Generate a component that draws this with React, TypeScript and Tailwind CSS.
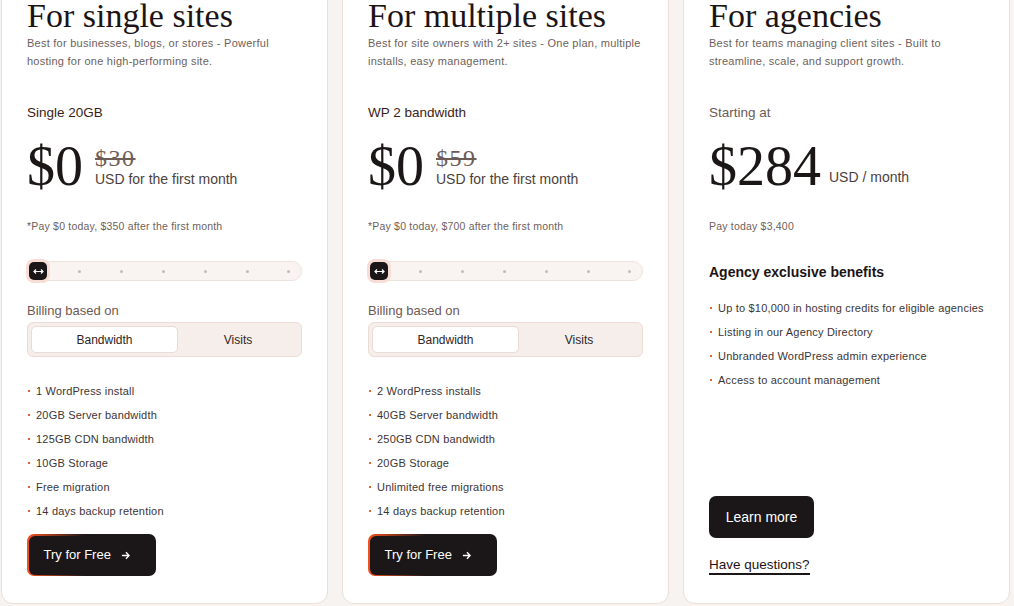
import React from 'react';

const serif = { fontFamily: '"Liberation Serif", "DejaVu Serif", serif' };

type Plan = {
  title: string;
  desc: string[];
  label: string;
  old: string;
  note: string;
  features: string[];
};

const plans: Plan[] = [
  {
    title: 'For single sites',
    desc: ['Best for businesses, blogs, or stores - Powerful', 'hosting for one high-performing site.'],
    label: 'Single 20GB',
    old: '$30',
    note: '*Pay $0 today, $350 after the first month',
    features: [
      '1 WordPress install',
      '20GB Server bandwidth',
      '125GB CDN bandwidth',
      '10GB Storage',
      'Free migration',
      '14 days backup retention',
    ],
  },
  {
    title: 'For multiple sites',
    desc: ['Best for site owners with 2+ sites - One plan, multiple', 'installs, easy management.'],
    label: 'WP 2 bandwidth',
    old: '$59',
    note: '*Pay $0 today, $700 after the first month',
    features: [
      '2 WordPress installs',
      '40GB Server bandwidth',
      '250GB CDN bandwidth',
      '20GB Storage',
      'Unlimited free migrations',
      '14 days backup retention',
    ],
  },
];

function Bullet({ children }: { children: React.ReactNode }) {
  return (
    <li className="ml-[1px] flex h-[24px] items-center gap-[6px] whitespace-nowrap text-[11px] tracking-[0.2px] text-[#3d3535]">
      <span className="h-[2px] w-[2px] shrink-0 bg-[#e0652e]" />
      {children}
    </li>
  );
}

function Slider() {
  return (
    <div className="flex h-[20px] items-center justify-between rounded-full border border-[#efe3dd] bg-[#f9f4f1] pl-[1px] pr-[3px]">
      <div className="flex h-[18px] w-[18px] items-center justify-center rounded-[5px] bg-[#1b1718] shadow-[0_0_0_3px_#f7ddd5]">
        <svg width="11" height="7" viewBox="0 0 11 7" fill="none" stroke="white" strokeWidth="1.2">
          <path d="M1 3.5h9M3 1.5 1 3.5l2 2M8 1.5l2 2-2 2" />
        </svg>
      </div>
      {[0, 1, 2, 3, 4, 5].map((i) => (
        <div key={i} className="flex w-[18px] justify-center">
          <span className="h-[3px] w-[3px] rounded-full bg-[#c4bab6]" />
        </div>
      ))}
    </div>
  );
}

function TryButton() {
  return (
    <div className="w-[129px] rounded-[7px] bg-[linear-gradient(90deg,#f4511e_0%,#1b1718_45%)] p-[1.5px]">
      <div className="flex h-[39px] items-center gap-[10px] rounded-[6px] bg-[#1b1718] pl-[15px] text-[13px] text-white">
        Try for Free
        <svg width="9" height="9" viewBox="0 0 10 10" fill="none" stroke="white" strokeWidth="1.5">
          <path d="M1 5h8M5.5 1.5 9 5 5.5 8.5" />
        </svg>
      </div>
    </div>
  );
}

function PlanCard({ p }: { p: Plan }) {
  return (
    <div className="flex w-[327px] shrink-0 flex-col rounded-[12px] border border-[#ecdfd8] bg-white px-[25px] pb-[27px] pt-[27px]">
      <h2 style={serif} className="text-[34px] leading-[38px] text-[#1c1414]">
        {p.title}
      </h2>
      <p className="-mt-[1px] text-[11px] leading-[18px] tracking-[0.25px] text-[#6e5f5c]">
        {p.desc[0]}
        <br />
        {p.desc[1]}
      </p>
      <div className="mt-[33px] text-[13.5px] leading-[20px] text-[#3b1d16]">{p.label}</div>
      <div className="mt-[15px] flex items-end gap-[12px]">
        <span style={serif} className="text-[56px] leading-[56px] text-[#1c1717]">
          $0
        </span>
        <div className="flex flex-col pb-[6px]">
          <span style={serif} className="text-[24px] leading-[23px] tracking-[1.5px] text-[#6e5c57] line-through">
            {p.old}
          </span>
          <span className="text-[14px] leading-[18px] text-[#4b3f3e]">USD for the first month</span>
        </div>
      </div>
      <div className="mt-[24px] text-[10.5px] leading-[16px] tracking-[0.2px] text-[#6e5f5c]">{p.note}</div>
      <div className="mt-[27px]">
        <Slider />
      </div>
      <div className="mt-[21px] text-[13px] leading-[18px] text-[#6e5a55]">Billing based on</div>
      <div className="mt-[2px] grid h-[35px] grid-cols-[147px_1fr] rounded-[6px] border border-[#ecdcd5] bg-[#f6eeea] p-[3px]">
        <div className="flex items-center justify-center rounded-[5px] border border-[#e9dcd6] bg-white text-[12px] text-[#2e2626]">
          Bandwidth
        </div>
        <div className="flex items-center justify-center text-[12px] text-[#2e2626]">Visits</div>
      </div>
      <ul className="mt-[22px]">
        {p.features.map((f) => (
          <Bullet key={f}>{f}</Bullet>
        ))}
      </ul>
      <div className="mt-[11px]">
        <TryButton />
      </div>
    </div>
  );
}

function AgencyCard() {
  return (
    <div className="flex w-[327px] shrink-0 flex-col rounded-[12px] border border-[#ecdfd8] bg-white px-[25px] pb-[27px] pt-[27px]">
      <h2 style={serif} className="text-[34px] leading-[38px] text-[#1c1414]">
        For agencies
      </h2>
      <p className="-mt-[1px] text-[11px] leading-[18px] tracking-[0.25px] text-[#6e5f5c]">
        Best for teams managing client sites - Built to
        <br />
        streamline, scale, and support growth.
      </p>
      <div className="mt-[33px] text-[13.5px] leading-[20px] text-[#6b5b58]">Starting at</div>
      <div className="mt-[15px] flex items-end gap-[8px]">
        <span style={serif} className="text-[56px] leading-[56px] text-[#1c1717]">
          $284
        </span>
        <span className="pb-[8px] text-[14px] leading-[18px] text-[#4b3f3e]">USD / month</span>
      </div>
      <div className="mt-[24px] text-[10.5px] leading-[16px] tracking-[0.2px] text-[#6e5f5c]">Pay today $3,400</div>
      <div className="mt-[28px] text-[14px] font-bold leading-[20px] text-[#1c1414]">Agency exclusive benefits</div>
      <ul className="mt-[14px]">
        {[
          'Up to $10,000 in hosting credits for eligible agencies',
          'Listing in our Agency Directory',
          'Unbranded WordPress admin experience',
          'Access to account management',
        ].map((f) => (
          <Bullet key={f}>{f}</Bullet>
        ))}
      </ul>
      <div className="mt-auto">
        <div className="flex h-[42px] w-[105px] items-center justify-center rounded-[7px] bg-[#1b1718] text-[14px] text-white">
          Learn more
        </div>
        <div className="mt-[19px] inline-block border-b-2 border-[#1b1718] text-[13.5px] leading-[16px] text-[#1c1414]">
          Have questions?
        </div>
      </div>
    </div>
  );
}

export default function App() {
  return (
    <div
      className="h-[606px] w-[1014px] overflow-hidden bg-[#f7f3f0] pl-[1px]"
      style={{ fontFamily: '"Liberation Sans", Arial, sans-serif' }}
    >
      <div className="-mt-[31px] flex items-stretch gap-[14px]">
        <PlanCard p={plans[0]} />
        <PlanCard p={plans[1]} />
        <AgencyCard />
      </div>
    </div>
  );
}
